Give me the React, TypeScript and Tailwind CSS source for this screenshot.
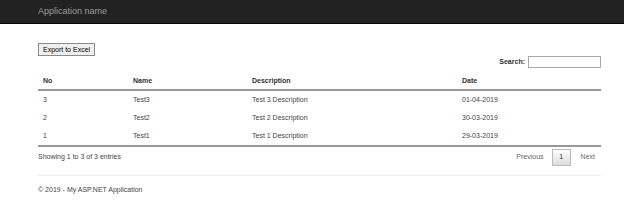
const rows = [
  { no: "3", name: "Test3", desc: "Test 3 Description", date: "01-04-2019" },
  { no: "2", name: "Test2", desc: "Test 2 Description", date: "30-03-2019" },
  { no: "1", name: "Test1", desc: "Test 1 Description", date: "29-03-2019" },
];

export default function App() {
  return (
    <div className="h-[213px] w-[624px] bg-white text-[7px] text-[#444] font-['Liberation_Sans',Arial,sans-serif]">
      {/* Navbar */}
      <nav className="flex h-[24px] items-center border-b border-[#080808] bg-[#222] pl-[38px]">
        <span className="text-[9px] text-[#9d9d9d]">Application name</span>
      </nav>

      <div className="ml-[38px] w-[563px]">
        <div className="pt-[19px]">
          <button className="h-[13px] border border-[#8a8a8a] bg-[#efefef] px-[4px] text-[7px] leading-none text-black">
            Export to Excel
          </button>
        </div>

        {/* Search */}
        <div className="flex items-center justify-end gap-[3px]">
          <label className="font-bold text-[7px] text-[#333]">Search:</label>
          <input className="h-[12px] w-[73px] border border-[#aaa] bg-white" />
        </div>

        {/* Table */}
        <div className="mt-[2px]">
          <div className="grid h-[21px] grid-cols-[90px_119px_210px_144px] items-center border-b-2 border-[#999] pt-[3px] font-bold text-[#333]">
            <div className="pl-[5px]">No</div>
            <div className="pl-[5px]">Name</div>
            <div className="pl-[5px]">Description</div>
            <div className="pl-[5px]">Date</div>
          </div>
          {rows.map((r) => (
            <div key={r.no} className="grid h-[18px] grid-cols-[90px_119px_210px_144px] items-center pt-[1px]">
              <div className="pl-[5px]">{r.no}</div>
              <div className="pl-[5px]">{r.name}</div>
              <div className="pl-[5px]">{r.desc}</div>
              <div className="pl-[5px]">{r.date}</div>
            </div>
          ))}
          <div className="border-b-2 border-[#999]" />
        </div>

        {/* Info + paging */}
        <div className="flex h-[21px] items-center justify-between">
          <span>Showing 1 to 3 of 3 entries</span>
          <div className="flex items-center text-[#666]">
            <span className="px-[4px]">Previous</span>
            <span className="mx-[4px] flex h-[17px] w-[19px] items-center justify-center border border-[#bbb] bg-gradient-to-b from-white to-[#dcdcdc] text-[#333]">
              1
            </span>
            <span className="px-[6px]">Next</span>
          </div>
        </div>

        <hr className="mt-[7px] border-t border-[#eee]" />
        <footer className="pt-[9px]">
          <p>© 2019 - My ASP.NET Application</p>
        </footer>
      </div>
    </div>
  );
}
